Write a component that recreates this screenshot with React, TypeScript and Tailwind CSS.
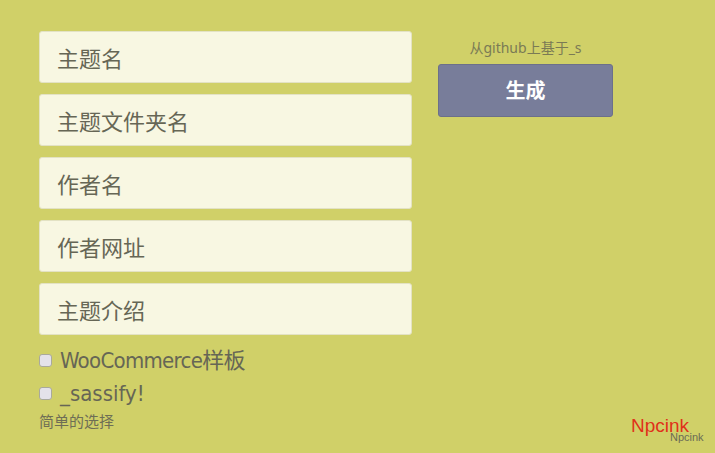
import React from 'react';

const fields = ['主题名', '主题文件夹名', '作者名', '作者网址', '主题介绍'];

const App = () => {
  return (
    <div
      className="relative w-[715px] h-[453px] overflow-hidden bg-[#d0d068]"
      style={{ fontFamily: '"Noto Sans", "Noto Sans CJK SC", sans-serif' }}
    >
      <div className="flex gap-[26px] pl-[39px] pt-[31px]">
        {/* 左侧表单 */}
        <div className="w-[373px] flex flex-col">
          <div className="flex flex-col gap-[11px]">
            {fields.map((f) => (
              <input
                key={f}
                placeholder={f}
                className="h-[52px] w-full rounded-[3px] border border-[#e3e2c4] bg-[#f8f7e2] px-[17px] pt-[2px] text-[22px] text-[#666655] placeholder:text-[#666655] outline-none"
              />
            ))}
          </div>
          <label className="mt-[11px] flex items-center h-[28px] text-[22px] text-[#666655]">
            <span className="w-[13px] h-[13px] rounded-[3px] border border-[#a9a99c] bg-[#e4e2ea] mr-[8px]" />
            <span className="tracking-[-0.7px]" style={{ fontFamily: '"DejaVu Sans Condensed", "Noto Sans CJK SC", sans-serif', fontStretch: 'condensed' }}>
              WooCommerce样板
            </span>
          </label>
          <label className="mt-[5px] flex items-center h-[28px] text-[22px] text-[#666655]">
            <span className="w-[13px] h-[13px] rounded-[3px] border border-[#a9a99c] bg-[#e4e2ea] mr-[8px]" />
            <span style={{ fontFamily: '"DejaVu Sans Condensed", "Noto Sans CJK SC", sans-serif', fontStretch: 'condensed' }}>
              _sassify!
            </span>
          </label>
          <p className="mt-[5px] text-[15px] leading-[18px] text-[#6e6e55]">简单的选择</p>
        </div>

        {/* 右侧按钮 */}
        <div className="w-[175px] flex flex-col items-center">
          <p className="mt-[8px] text-[14px] leading-[18px] text-[#7a7a55]">从github上基于_s</p>
          <button className="mt-[7px] w-[175px] h-[53px] rounded-[3px] border border-[#6c708a] bg-[#787d9a] text-white text-[20px] font-bold">
            生成
          </button>
        </div>
      </div>

      {/* 水印 */}
      <div className="absolute left-[631px] top-[414px] text-[19px] leading-[24px] text-[#e0301a]" style={{ fontFamily: '"Liberation Sans", sans-serif' }}>
        Npcink
      </div>
      <div className="absolute left-[670px] top-[430px] text-[11px] leading-[14px] text-[#6b6b55]" style={{ fontFamily: '"Liberation Sans", sans-serif' }}>
        Npcink
      </div>
    </div>
  );
};

export default App;
